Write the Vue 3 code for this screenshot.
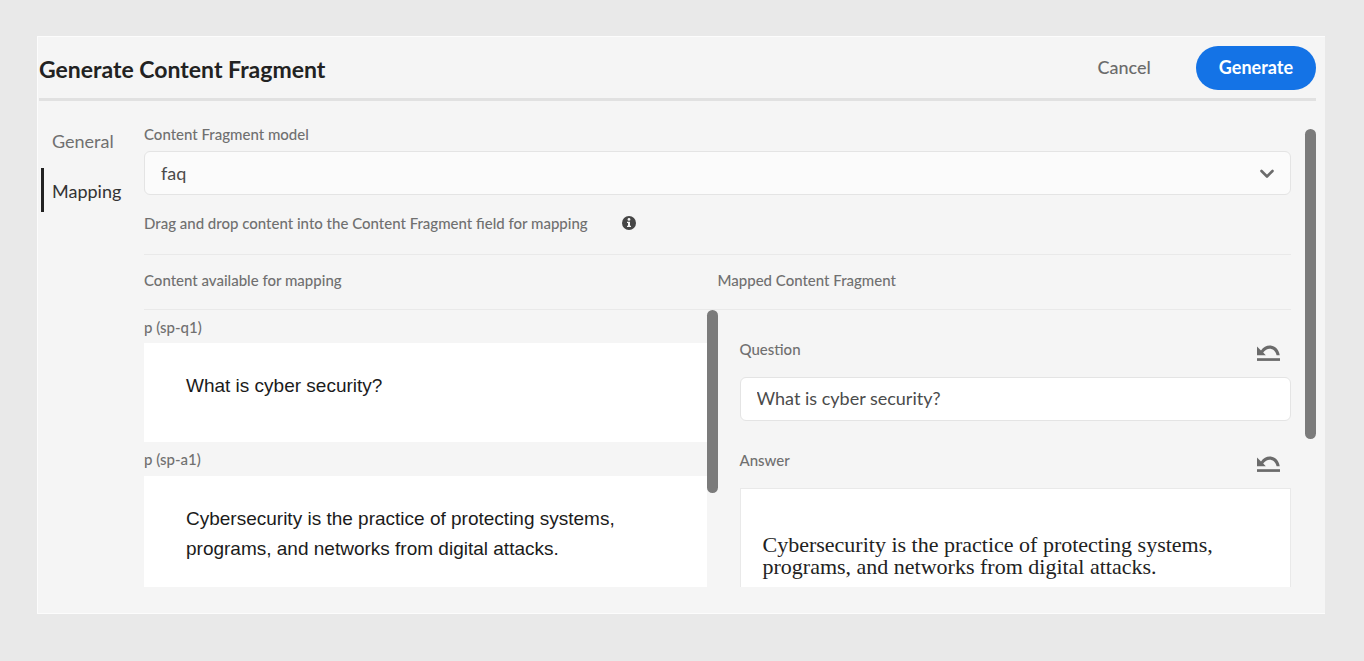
<script setup>
import { ref } from 'vue'

const tabs = ['General', 'Mapping']
const activeTab = ref('Mapping')
const model = ref('faq')
const answerText =
  'Cybersecurity is the practice of protecting systems, programs, and networks from digital attacks.'
const sources = [
  { id: 'sp-q1', label: 'p (sp-q1)', text: 'What is cyber security?' },
  { id: 'sp-a1', label: 'p (sp-a1)', text: answerText },
]
const question = ref('What is cyber security?')
const answer = ref(answerText)
</script>

<template>
  <main class="page">
    <section class="dialog" aria-labelledby="dialog-title">
      <header class="header">
        <h1 id="dialog-title" class="title">Generate Content Fragment</h1>
        <div class="actions">
          <button type="button" class="btn btn-quiet">Cancel</button>
          <button type="button" class="btn btn-primary">Generate</button>
        </div>
      </header>

      <div class="body">
        <nav class="tabs">
          <button
            v-for="tab in tabs"
            :key="tab"
            type="button"
            class="tab"
            :class="{ active: tab === activeTab }"
            @click="activeTab = tab"
          >{{ tab }}</button>
        </nav>

        <div class="content">
          <label class="label" for="model">Content Fragment model</label>
          <div class="select-wrap">
            <select id="model" v-model="model" class="field select">
              <option value="faq">faq</option>
            </select>
            <svg class="chevron" viewBox="0 0 16 10" aria-hidden="true">
              <path d="M2.5 2 L8 7.5 L13.5 2" />
            </svg>
          </div>

          <div class="hint">
            <span class="label">Drag and drop content into the Content Fragment field for mapping</span>
            <svg class="info" viewBox="0 0 14 14" aria-hidden="true">
              <circle cx="7" cy="7" r="7" fill="#464646" />
              <circle cx="7" cy="3.4" r="1.4" fill="#f5f5f5" />
              <path d="M5 5.8h3v3.9h1v1.3H5V9.7h1V7.1H5z" fill="#f5f5f5" />
            </svg>
          </div>

          <div class="columns headings">
            <h2 class="label">Content available for mapping</h2>
            <h2 class="label">Mapped Content Fragment</h2>
          </div>

          <div class="columns panes">
            <div class="pane">
              <div class="sources">
                <article v-for="item in sources" :key="item.id" class="source">
                  <h3 class="label source-label">{{ item.label }}</h3>
                  <div class="card"><p class="card-text">{{ item.text }}</p></div>
                </article>
              </div>
              <div class="thumb thumb-sources"></div>
            </div>

            <div class="mapped">
              <div class="field-head">
                <label class="label" for="question">Question</label>
                <button type="button" class="undo" aria-label="Revert question">
                  <svg viewBox="0 0 24 18" aria-hidden="true">
                    <path d="M0 1.5 V10.3 H8.8 L6.2 7.6 C10 1.8 18 2.6 19.6 10.3 H22.7 C21.4 -0.6 9.4 -2.8 4 5.4 Z" />
                    <rect x="0" y="13.2" width="23" height="2.7" />
                  </svg>
                </button>
              </div>
              <input id="question" v-model="question" type="text" class="field input" />
              <div class="field-head">
                <label class="label" for="answer">Answer</label>
                <button type="button" class="undo" aria-label="Revert answer">
                  <svg viewBox="0 0 24 18" aria-hidden="true">
                    <path d="M0 1.5 V10.3 H8.8 L6.2 7.6 C10 1.8 18 2.6 19.6 10.3 H22.7 C21.4 -0.6 9.4 -2.8 4 5.4 Z" />
                    <rect x="0" y="13.2" width="23" height="2.7" />
                  </svg>
                </button>
              </div>
              <textarea id="answer" v-model="answer" rows="2" class="answer"></textarea>
            </div>
          </div>
        </div>
        <div class="thumb thumb-body"></div>
      </div>
    </section>
  </main>
</template>

<style>
body {
  background: #e9e9e9;
}
</style>

<style scoped>
.page,
.page * {
  box-sizing: border-box;
}
.page {
  min-height: 100vh;
  padding: 36px 39px 47px 37px;
  background: #e9e9e9;
  font-family: Lato, "Open Sans", sans-serif;
  color: #6e6e6e;
}
.dialog {
  padding: 0 9px 26px 1px;
  background: #f5f5f5;
  border: 1px solid #fcfcfc;
  border-right: 0;
}
.header {
  display: flex;
  align-items: center;
  justify-content: space-between;
  height: 64px;
  border-bottom: 3px solid #e1e1e1;
}
.title {
  margin: 0;
  padding-top: 2px;
  font-size: 23px;
  line-height: 30px;
  font-weight: 700;
  color: #222;
}
.actions {
  display: flex;
  gap: 22px;
}
.btn {
  height: 44px;
  padding: 0 23px 2px;
  border: 0;
  border-radius: 22px;
  background: transparent;
  font-family: inherit;
  font-size: 18px;
  color: #6b6b6b;
}
.btn-quiet {
  font-weight: 500;
}
.btn-primary {
  background: #1473e6;
  color: #fff;
  font-weight: 700;
}
.body {
  display: flex;
  align-items: flex-start;
}
.tabs {
  display: flex;
  flex-direction: column;
  gap: 6px;
  width: 105px;
  padding: 17px 0 0 2px;
  flex: none;
}
.tab {
  height: 44px;
  padding: 2px 0 0 8px;
  border: 0;
  border-left: 3px solid transparent;
  background: transparent;
  text-align: left;
  font-family: inherit;
  font-size: 18px;
  color: #707070;
}
.tab.active {
  border-left-color: #222;
  color: #333;
}
.content {
  flex: 1;
  min-width: 0;
  padding-top: 23px;
}
.label {
  display: block;
  margin: 0;
  font-size: 15px;
  line-height: 20px;
  font-weight: 500;
  color: #707070;
}
.select-wrap {
  position: relative;
  margin-top: 7px;
}
.field {
  display: block;
  width: 100%;
  height: 44px;
  padding: 0 16px;
  border: 1px solid #e4e4e4;
  border-radius: 6px;
  font-family: inherit;
  font-size: 18px;
  color: #4b4b4b;
}
.select {
  appearance: none;
  background: #fbfbfb;
}
.chevron {
  position: absolute;
  right: 16px;
  top: 18px;
  width: 16px;
  height: 10px;
  fill: none;
  stroke: #6b6b6b;
  stroke-width: 2.6;
  stroke-linecap: round;
  stroke-linejoin: round;
}
.hint {
  display: flex;
  align-items: center;
  gap: 34px;
  height: 60px;
  padding-bottom: 3px;
  border-bottom: 1px solid #e9e9e9;
}
.info {
  width: 14px;
  height: 14px;
}
.columns {
  display: grid;
  grid-template-columns: 1fr 1fr;
}
.headings {
  align-items: center;
  height: 55px;
  padding-bottom: 4px;
  border-bottom: 1px solid #e9e9e9;
}
.panes {
  align-items: start;
}
.pane {
  display: flex;
  align-items: flex-start;
}
.sources {
  flex: 1;
  min-width: 0;
}
.source-label {
  padding: 7px 0 6px;
}
.source + .source .source-label {
  padding-bottom: 7px;
}
.card {
  min-height: 99px;
  padding: 28px 42px 23px;
  background: #fff;
}
.card-text {
  margin: 0;
  font-family: "Liberation Sans", Arial, sans-serif;
  font-size: 19px;
  line-height: 30px;
  color: #1b1b1b;
}
.thumb {
  flex: none;
  width: 11px;
  border-radius: 6px;
  background: #7b7b7b;
}
.thumb-sources {
  height: 183px;
}
.thumb-body {
  height: 310px;
  margin: 28px 0 0 14px;
}
.mapped {
  padding: 22px 0 0 22px;
}
.field-head {
  display: flex;
  justify-content: space-between;
  align-items: flex-start;
  height: 45px;
  padding-top: 7px;
}
.input + .field-head {
  height: 67px;
  padding-top: 29px;
}
.undo {
  display: block;
  margin: 6px 10px 0 0;
  padding: 0;
  border: 0;
  background: transparent;
}
.undo svg {
  display: block;
  width: 24px;
  height: 18px;
  fill: #6b6b6b;
}
.input {
  padding-bottom: 2px;
  background: #fff;
}
.answer {
  display: block;
  width: 100%;
  padding: 45px 22px 9px;
  border: 1px solid #e9e9e9;
  border-bottom: 0;
  background: #fff;
  resize: none;
  overflow: hidden;
  font-family: "Liberation Serif", "Times New Roman", serif;
  font-size: 22px;
  line-height: 22px;
  color: #222;
}
</style>
